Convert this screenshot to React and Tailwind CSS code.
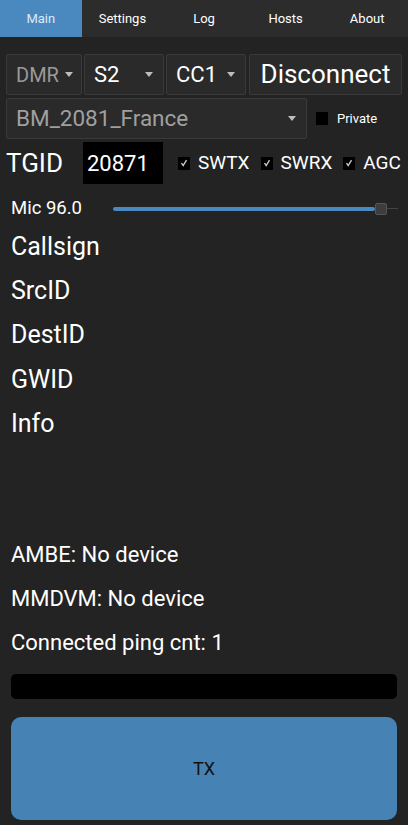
import { useState } from "react";

const tabs = ["Main", "Settings", "Log", "Hosts", "About"];

const Caret = () => (
  <svg width="8" height="5" viewBox="0 0 8 5" className="shrink-0">
    <path d="M0 0h8L4 5z" fill="#bdbdbd" />
  </svg>
);

const Check = ({ label }) => (
  <div className="flex items-center gap-[8px]">
    <div className="w-[12px] h-[13px] bg-black flex items-center justify-center">
      <svg width="8" height="8" viewBox="0 0 8 8">
        <path d="M1.5 4.2 3.2 6.5 6.5 1.2" stroke="#cfcfcf" strokeWidth="1.3" fill="none" />
      </svg>
    </div>
    <span className="text-[19px] text-white">{label}</span>
  </div>
);

const Select = ({ value, className, textClass }) => (
  <div
    className={`h-[41px] flex items-center justify-between border border-[#3a3a3a] bg-[#2a2a2a] rounded-[2px] pl-[9px] pr-[10px] ${className}`}
  >
    <span className={textClass}>{value}</span>
    <Caret />
  </div>
);

export default function App() {
  const [active] = useState(0);

  return (
    <div
      className="w-[408px] h-[825px] bg-[#232323] text-white flex flex-col overflow-hidden"
      style={{ fontFamily: "Roboto, 'Noto Sans', sans-serif" }}
    >
      {/* tab bar */}
      <div className="h-[37px] flex bg-[#2c2c2c] shrink-0">
        {tabs.map((t, i) => (
          <div
            key={t}
            className={`flex-1 flex items-center justify-center text-[13px] pt-[1px] ${
              i === active ? "bg-[#4a89c0] text-[#dceaf7]" : "text-white"
            }`}
          >
            {t}
          </div>
        ))}
      </div>

      <div className="flex flex-col px-[6px] pt-[17px]">
        {/* mode row */}
        <div className="flex gap-[2px]">
          <Select value="DMR" className="w-[76px] gap-[6px]" textClass="text-[20px] text-[#9a9a9a]" />
          <Select value="S2" className="w-[80px]" textClass="text-[22px] text-white" />
          <Select value="CC1" className="w-[80px]" textClass="text-[22px] text-white" />
          <div className="flex-1 h-[41px] flex items-center justify-center border border-[#3a3a3a] bg-[#2a2a2a] rounded-[2px] text-[26px] text-white ml-[1px]">
            Disconnect
          </div>
        </div>

        {/* host row */}
        <div className="flex items-center mt-[3px]">
          <Select
            value="BM_2081_France"
            className="w-[301px]"
            textClass="text-[22.5px] text-[#a0a0a0]"
          />
          <div className="ml-[9px] w-[12px] h-[13px] bg-black" />
          <span className="ml-[9px] text-[13px] text-white">Private</span>
        </div>

        {/* tgid row */}
        <div className="flex items-center mt-[3px]">
          <span className="text-[26px] text-white w-[77px]">TGID</span>
          <div className="w-[80px] h-[42px] bg-black flex items-center pl-[4px] text-[22px] text-white">
            20871
          </div>
          <div className="flex items-center gap-[11px] ml-[15px]">
            <Check label="SWTX" />
            <Check label="SWRX" />
            <Check label="AGC" />
          </div>
        </div>

        {/* mic row */}
        <div className="flex items-center mt-[11px] pl-[5px]">
          <span className="text-[18.5px] text-white w-[102px]">Mic 96.0</span>
          <div className="flex-1 h-[14px] flex items-center pr-[4px]">
            <div className="w-[262px] h-[4px] bg-[#4a89c0] rounded-full" />
            <div className="w-[12px] h-[12px] bg-[#3d3d3d] border border-[#555] rounded-[2px]" />
            <div className="flex-1 h-[1px] bg-[#444]" />
          </div>
        </div>

        {/* info labels */}
        <div className="flex flex-col pl-[5px] mt-[2px] text-[25px] text-white leading-[44.3px]">
          <span>Callsign</span>
          <span>SrcID</span>
          <span>DestID</span>
          <span>GWID</span>
          <span>Info</span>
        </div>

        {/* status */}
        <div className="flex flex-col pl-[5px] mt-[87px] text-[22px] text-white leading-[44px]">
          <span>AMBE: No device</span>
          <span>MMDVM: No device</span>
          <span>Connected ping cnt: 1</span>
        </div>

        <div className="mx-[5px] mt-[9px] h-[25px] bg-black rounded-[5px]" />

        <button className="mx-[5px] mt-[18px] h-[103px] bg-[#4682b4] rounded-[10px] text-[18px] text-[#111]">
          TX
        </button>
      </div>
    </div>
  );
}
